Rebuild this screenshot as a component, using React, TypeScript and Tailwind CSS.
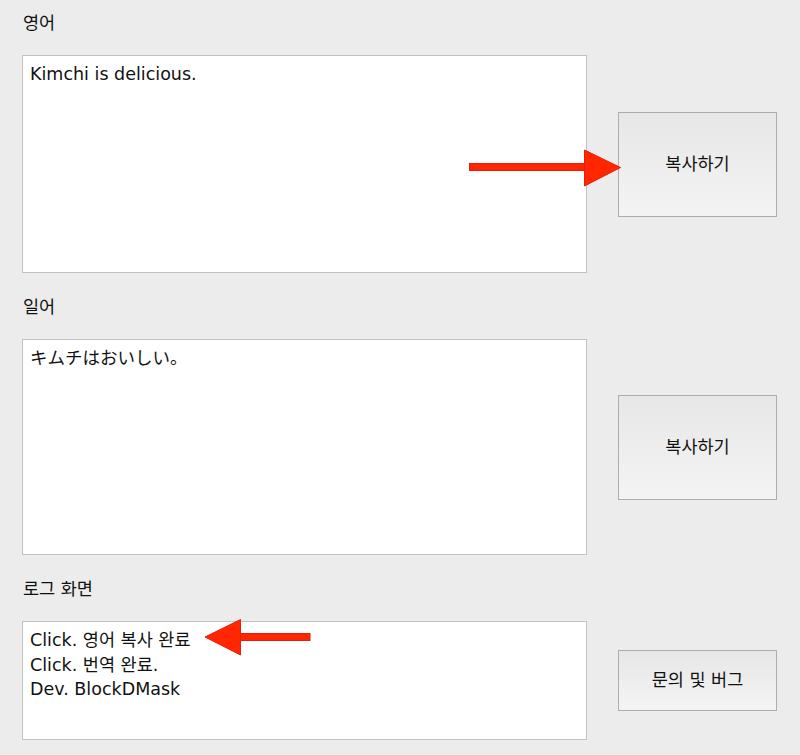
const font = "font-['DejaVu_Sans','Noto_Sans_CJK_KR',sans-serif]";

type SectionProps = {
  label: string;
  text: string;
  boxHeight: string;
  buttonHeight: string;
  buttonLabel: string;
};

const Section = ({ label, text, boxHeight, buttonHeight, buttonLabel }: SectionProps) => (
  <div className="flex flex-col">
    <div className="h-6 pl-px text-[17.5px] leading-6 text-[#111]">{label}</div>
    <div className="mt-5 flex items-center gap-[31px]">
      <textarea
        readOnly
        value={text}
        className={`${boxHeight} w-[565px] resize-none border border-[#c2c2c2] bg-white px-[7px] py-[6px] text-[17.5px] leading-[24.5px] text-[#111] outline-none ${font}`}
      />
      <button
        type="button"
        className={`${buttonHeight} w-[159px] border border-[#adadad] bg-gradient-to-b from-[#e7e7e7] to-[#f4f4f4] text-[17.5px] text-[#111] ${font}`}
      >
        {buttonLabel}
      </button>
    </div>
  </div>
);

const Arrows = () => (
  <svg className="pointer-events-none absolute left-0 top-0" width="800" height="755">
    {/* right-pointing arrow at the first copy button */}
    <g fill="#ff2600" stroke="#e41f0b" strokeWidth="1">
      <rect x="469.5" y="163.5" width="116" height="7" />
      <polygon points="584.5,150 620.5,167.5 584.5,186" />
    </g>
    {/* left-pointing arrow at the log line */}
    <g fill="#ff2600" stroke="#e41f0b" strokeWidth="1">
      <rect x="239" y="633.5" width="71" height="7" />
      <polygon points="240.5,619.5 205,637 240.5,655" />
    </g>
  </svg>
);

export default function App() {
  return (
    <div className={`relative min-h-screen w-full bg-[#ececec] pt-[11px] px-[22px] ${font}`}>
      <div className="flex flex-col gap-[22px]">
        <Section
          label="영어"
          text="Kimchi is delicious."
          boxHeight="h-[218px]"
          buttonHeight="h-[105px]"
          buttonLabel="복사하기"
        />
        <Section
          label="일어"
          text="キムチはおいしい。"
          boxHeight="h-[216px]"
          buttonHeight="h-[105px]"
          buttonLabel="복사하기"
        />
        <Section
          label="로그 화면"
          text={"Click. 영어 복사 완료\nClick. 번역 완료.\nDev. BlockDMask"}
          boxHeight="h-[119px]"
          buttonHeight="h-[61px]"
          buttonLabel="문의 및 버그"
        />
      </div>
      <Arrows />
    </div>
  );
}
